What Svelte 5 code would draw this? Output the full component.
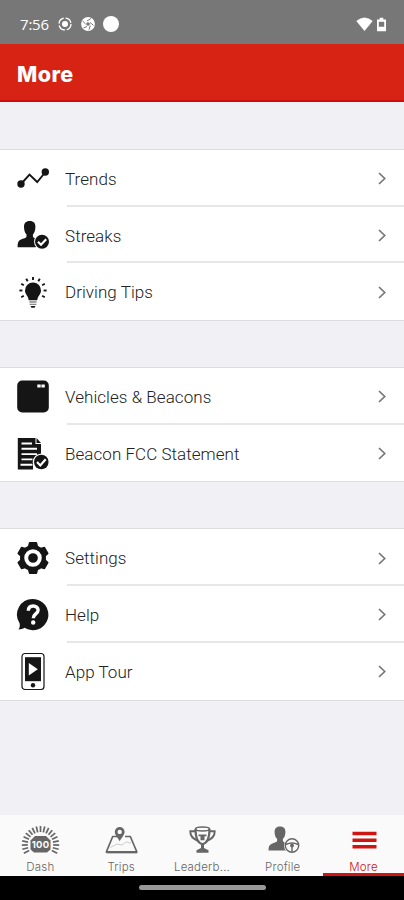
<script>
  const sections = [
    [
      { label: "Trends", icon: "trends" },
      { label: "Streaks", icon: "streaks" },
      { label: "Driving Tips", icon: "tips" },
    ],
    [
      { label: "Vehicles & Beacons", icon: "beacon" },
      { label: "Beacon FCC Statement", icon: "statement" },
    ],
    [
      { label: "Settings", icon: "settings" },
      { label: "Help", icon: "help" },
      { label: "App Tour", icon: "tour" },
    ],
  ];

  const tabs = [
    { label: "Dash", icon: "dash" },
    { label: "Trips", icon: "trips" },
    { label: "Leaderb...", icon: "trophy" },
    { label: "Profile", icon: "profile" },
    { label: "More", icon: "more" },
  ];

  let active = $state("More");

  const rays = [-120, -90, -60, -30, 0, 30, 60, 90, 120];
  const ticks = Array.from({ length: 19 }, (_, i) => -117 + i * 13);
</script>

{#snippet glyph(name)}
  {#if name === "trends"}
    <path d="M4 21 12.5 11.5 20.2 19 28.5 9" fill="none" stroke="currentColor" stroke-width="1.9" />
    <circle cx="4" cy="21" r="3.7" />
    <circle cx="28.3" cy="9" r="3.7" />
  {:else if name === "streaks"}
    <path d="M12.7 1c4 0 5.900 2.300 5.700 6-.1 3.600-1 6-2.500 7.400v2c0 1.500 4.500 2.300 6.300 4.800l-3.600 6H.6c0-4 .4-6.400 2.900-7.500 3.200-1.500 6-1.800 6-3.300v-2C8 13 7.100 10.600 7 7c-.1-3.700 1.700-6 5.700-6z" />
    <circle cx="25" cy="21.700" r="7.900" fill="#fff" />
    <circle cx="25" cy="21.700" r="7" />
    <path d="m21 21.700 3 3 5.200-5.500" fill="none" stroke="#fff" stroke-width="2.200" />
  {:else if name === "tips"}
    <path d="M16 6.500a8 8 0 0 1 8 8c0 4-3.400 5.500-3.700 9.700h-8.600C11.400 20 8 18.500 8 14.500a8 8 0 0 1 8-8z" />
    <path d="M12.400 26h7.200M12.600 28.300h6.800" stroke="#888" stroke-width="1.300" />
    <path d="M13.500 30h5l-1 1.700h-3z" />
    {#each rays as angle}
      <path d="M16 .9v3" stroke="currentColor" stroke-width="1.900" transform="rotate({angle} 16 14.500)" />
    {/each}
  {:else if name === "beacon"}
    <rect x=".2" y="-.5" width="31.600" height="32" rx="5" />
    <path d="M20.300 5h7.500" stroke="#fff" stroke-width="2.800" stroke-dasharray="3.400 .7" />
  {:else if name === "statement"}
    <path d="M.8 0h17.700v6H24v12l-8 8v5.500H.8z" />
    <path d="M19.500 0v5h4.500z" />
    <path d="M4.500 5.500h10.500M4.500 10.800h15.500M4.500 16.100h15.500M4.500 21.400h11M3.500 26.700h12" stroke="#fff" stroke-width="1.900" />
    <circle cx="24.300" cy="24" r="8.600" fill="#fff" />
    <circle cx="24.300" cy="24" r="7.300" />
    <path d="m20 24 3.300 3.400 5.400-6.200" fill="none" stroke="#fff" stroke-width="2.200" />
  {:else if name === "settings"}
    <circle cx="16" cy="16" r="13" />
    {#each [0, 60, 120, 180, 240, 300] as angle}
      <path d="M11.700 5 12.700 1h6.600l1 4z" stroke="currentColor" stroke-width="1.800" stroke-linejoin="round" transform="rotate({angle} 16 16)" />
    {/each}
    <circle cx="16" cy="16" r="6.800" fill="none" stroke="#fff" stroke-width="3.900" />
  {:else if name === "help"}
    <path d="M16 0a15.600 15.600 0 1 1-8.500 28.800c-1.700 1.300-3.600 1.600-6.100 1.600 1.400-1.700 1.700-3.500 1.200-6.200A15.600 15.600 0 0 1 16 0z" />
    <path d="M11.300 11.800c.1-3.200 2.100-4.800 4.900-4.800s4.900 1.600 4.900 4.300c0 3.300-4.800 3.600-4.800 8" fill="none" stroke="#fff" stroke-width="3.400" />
    <circle cx="16.200" cy="23.500" r="2.200" fill="#fff" />
  {:else if name === "tour"}
    <rect x="5" y="-2.500" width="22" height="36" rx="3" fill="#fff" stroke="currentColor" stroke-width="1.200" />
    <path d="M8 1.200h16v24H8z" />
    <path d="m11.800 7 9 6.200-9 6.200z" fill="#fff" />
    <circle cx="16" cy="29.300" r="2.200" />
  {:else if name === "dash"}
    {#each ticks as angle}
      <path d="M20.500 1v6" stroke="currentColor" stroke-width="1.700" transform="rotate({angle} 20.500 19.700)" />
    {/each}
    <path d="M15 11h11l4.500 4.500v9L27 27.500H14l-3.500-3v-9z" />
    <text x="20.500" y="23" text-anchor="middle">100</text>
  {:else if name === "trips"}
    <path d="M17 11.500h-5.300L5.300 27h30.600l-6.600-15.500H24" fill="none" stroke="currentColor" stroke-width="1.700" stroke-linejoin="round" />
    <path d="M5.500 27.200H36" stroke="currentColor" stroke-width="2.300" />
    <path d="m9 22.500 7-3.500 5 1 4-3 5 1" fill="none" stroke="#ccc" />
    <path d="M18.700 2a4.900 4.900 0 0 1 4.900 5c0 3-2.700 5-4.900 9.200-2.200-4.200-4.900-6.200-4.900-9.200a4.900 4.900 0 0 1 4.900-5z" />
    <circle cx="18.700" cy="6.900" r="2.200" fill="#fafafa" />
  {:else if name === "trophy"}
    <path d="M13.500 4c0 9 1.800 14 7 15.200C25.700 18 27.500 13 27.500 4" fill="none" stroke="currentColor" stroke-width="2.200" />
    <ellipse cx="20.500" cy="4" rx="7" ry="2" fill="none" stroke="currentColor" stroke-width="1.600" />
    <path d="M13.500 6.300H8.300c-.2 4.500 2.700 7.700 8 9.800M27.500 6.300h5.200c.2 4.500-2.700 7.700-8 9.800" fill="none" stroke="currentColor" stroke-width="1.900" />
    <path d="M16.500 9.500h8v1.800h-2v4h-4v-4h-2zM19 18.500h3v4.500l4.500 2.200v2.600h-12v-2.600L19 23z" />
  {:else if name === "profile"}
    <path d="M17 1.500c3.900 0 5.600 2.400 5.400 5.700-.1 3-.9 5.200-2.500 6.600v2c0 1.200 2 1.800 4 3.200v6.500H5.500c0-3.500.6-5.500 2.900-6.500 3-1.400 5.700-1.800 5.700-3.200v-2c-1.600-1.400-2.400-3.600-2.500-6.600-.1-3.300 1.500-5.700 5.400-5.700z" />
    <circle cx="29" cy="20.500" r="8" fill="#fafafa" />
    <circle cx="29" cy="20.500" r="6.700" fill="none" stroke="currentColor" stroke-width="1.400" />
    <path d="M23 19.500c4-2 8-2 12 0M29 21v6" fill="none" stroke="currentColor" stroke-width="1.400" />
    <circle cx="29" cy="20.500" r="1.900" />
  {:else if name === "more"}
    <path d="M8.500 8.500h24M8.500 15.200h24M8.500 21.700h24" stroke="currentColor" stroke-width="3.400" />
  {/if}
{/snippet}

<div class="screen">
  <div class="status-bar">
    <span class="time">7:56</span>
    <svg class="status-icon" viewBox="0 0 14 14">
      <circle cx="7" cy="7" r="6" fill="none" stroke="#fff" stroke-width="1.300" stroke-dasharray="7.400 2" />
      <circle cx="7" cy="7" r="3" />
    </svg>
    <svg class="status-icon aperture" viewBox="0 0 14 14">
      <circle cx="7" cy="7" r="6.900" />
      <circle cx="7" cy="7" r="1.800" fill="#777" />
      <path d="m6 4 4-2.500M9 5.500l3.500 2.800M9.300 8.500 8 12.700M6 9.500 2.500 11M4.600 7 1.500 4" stroke="#777" />
    </svg>
    <span class="dot"></span>
    <svg class="wifi" viewBox="0 0 17 14">
      <path d="M.3 4Q8.500-3 16.700 4L8.500 14z" />
    </svg>
    <svg class="battery" viewBox="0 0 10 15">
      <path d="M3 0h4v2h3v13H0V2h3z" />
      <path d="M2 4.500h6v5.500H2z" fill="#777" />
    </svg>
  </div>

  <header>
    <h1>More</h1>
  </header>

  <main>
    {#each sections as items}
      <ul>
        {#each items as item}
          <li>
            <svg class="item-icon" viewBox="0 0 32 32">{@render glyph(item.icon)}</svg>
            <div class="item-body">
              <span class="item-label">{item.label}</span>
              <svg class="chevron" viewBox="0 0 8 13">
                <path d="m1 1 5.700 5.500L1 12" />
              </svg>
            </div>
          </li>
        {/each}
      </ul>
    {/each}
  </main>

  <nav>
    {#each tabs as tab}
      <button class:active={active === tab.label} onclick={() => (active = tab.label)}>
        <svg class="tab-icon" viewBox="0 0 40 32">{@render glyph(tab.icon)}</svg>
        <span>{tab.label}</span>
      </button>
    {/each}
  </nav>

  <div class="home-bar"><div class="pill"></div></div>
</div>

<style>
  :global(body) {
    margin: 0;
  }

  .screen {
    display: flex;
    flex-direction: column;
    width: 404px;
    height: 900px;
    overflow: hidden;
    background: #f1f0f5;
    font-family: Roboto, "Liberation Sans", sans-serif;
  }

  .status-bar {
    display: flex;
    align-items: center;
    flex-shrink: 0;
    box-sizing: border-box;
    height: 44px;
    padding: 4px 18px 0 20px;
    background: #777;
    color: #fff;
    fill: #fff;
  }

  .time {
    width: 38px;
    font-family: "Open Sans", sans-serif;
    font-size: 15px;
    letter-spacing: -0.2px;
  }

  .status-icon {
    width: 14px;
    height: 14px;
  }

  .aperture {
    margin-left: 9px;
  }

  .dot {
    width: 16px;
    height: 16px;
    margin-left: 8px;
    border-radius: 50%;
    background: #fff;
  }

  .wifi {
    width: 17px;
    height: 14px;
    margin-left: auto;
  }

  .battery {
    width: 9px;
    height: 15px;
    margin-left: 4px;
  }

  header {
    display: flex;
    align-items: center;
    flex-shrink: 0;
    box-sizing: border-box;
    height: 58px;
    padding: 4px 17px 0;
    background: #d62314;
    border-bottom: 2px solid #c9100c;
  }

  h1 {
    margin: 0;
    color: #fff;
    font-family: Inter, sans-serif;
    font-size: 21.5px;
    font-weight: 800;
    letter-spacing: 0.4px;
  }

  main {
    display: flex;
    flex: 1;
    flex-direction: column;
    gap: 46px;
    padding-top: 47px;
  }

  ul {
    margin: 0;
    padding: 0;
    list-style: none;
    background: #fff;
    border-top: 1px solid #dddde1;
    border-bottom: 1px solid #dddde1;
  }

  li {
    display: flex;
    align-items: center;
    height: 56.7px;
    padding-left: 17px;
  }

  .item-icon {
    width: 32px;
    height: 32px;
    margin-top: 1px;
    overflow: visible;
    color: #151515;
    fill: currentColor;
  }

  .item-body {
    display: flex;
    flex: 1;
    align-items: center;
    justify-content: space-between;
    box-sizing: border-box;
    height: 100%;
    margin-left: 18px;
    padding: 3px 18px 0 0;
    border-bottom: 2px solid #e7e7e9;
  }

  li:last-child .item-body {
    border-color: transparent;
  }

  .item-label {
    margin-left: -2px;
    color: #222;
    font-size: 17px;
    font-weight: 300;
    letter-spacing: 0.05px;
  }

  .chevron {
    width: 8px;
    height: 13px;
    fill: none;
    stroke: #777;
    stroke-width: 1.7;
  }

  nav {
    display: flex;
    flex-shrink: 0;
    height: 61px;
    background: #fafafa;
  }

  button {
    display: flex;
    flex: 1;
    flex-direction: column;
    align-items: center;
    min-width: 0;
    padding: 10px 0 0;
    border: 0;
    border-bottom: 3px solid transparent;
    background: none;
    color: #666;
    font-family: Inter, sans-serif;
    font-size: 11.5px;
    font-weight: 300;
    letter-spacing: 0.2px;
    line-height: 14px;
  }

  .active {
    color: #cf1512;
    border-bottom-color: #cf1512;
  }

  .tab-icon {
    flex-shrink: 0;
    width: 40px;
    height: 32px;
    margin-bottom: 3px;
    fill: currentColor;
  }

  .tab-icon text {
    fill: #fafafa;
    font-size: 9.5px;
    font-weight: 700;
  }

  .home-bar {
    display: flex;
    justify-content: center;
    flex-shrink: 0;
    height: 24px;
    background: #000;
  }

  .pill {
    width: 127px;
    height: 5px;
    margin-top: 9px;
    border-radius: 3px;
    background: #999;
  }
</style>
